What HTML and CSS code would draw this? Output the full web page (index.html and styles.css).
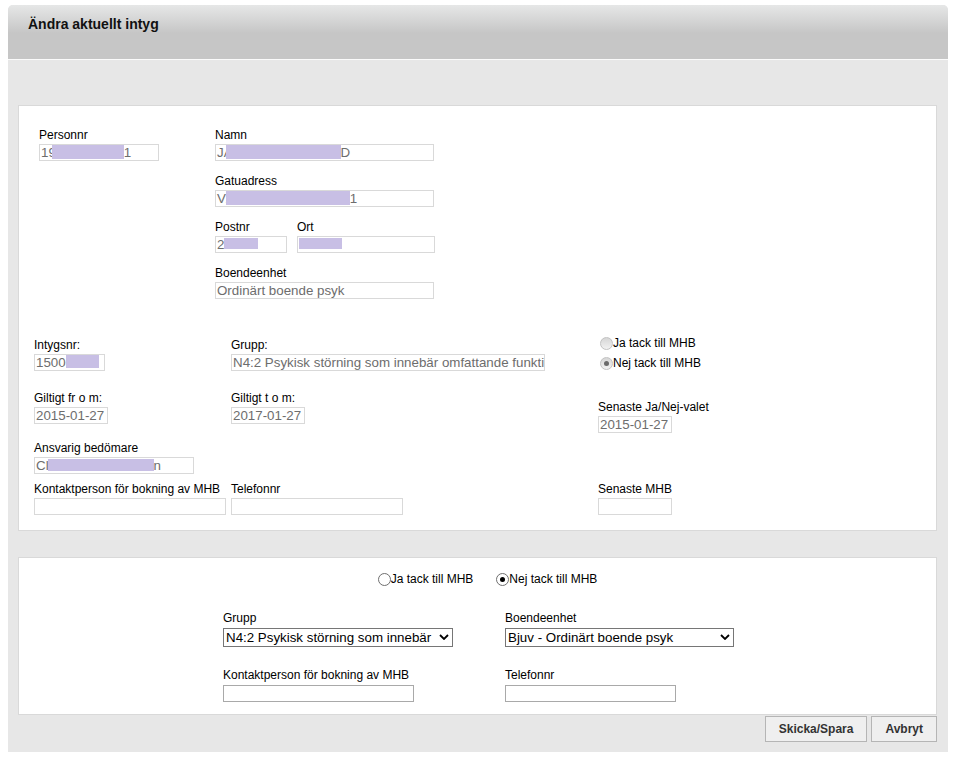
FILE: index.html
```html
<!DOCTYPE html>
<html lang="sv">
<head>
<meta charset="utf-8">
<title>Ändra aktuellt intyg</title>
<link rel="stylesheet" href="styles.css">
</head>
<body>
<div class="window">
  <div class="win-head"><h1 class="win-title">Ändra aktuellt intyg</h1></div>
  <div class="win-body">
    <section class="panel panel-info">
      <div class="person">
        <div class="person-main">
          <div class="field">
            <span class="lbl">Personnr</span>
            <div class="ro w-120">19<span class="red red-pnr"></span>1</div>
          </div>
        </div>
        <div class="stack">
          <div class="field">
            <span class="lbl">Namn</span>
            <div class="ro w-219">JA<span class="red red-namn"></span>D</div>
          </div>
          <div class="field">
            <span class="lbl">Gatuadress</span>
            <div class="ro w-219">VÄ<span class="red red-gata"></span>1</div>
          </div>
          <div class="split">
            <div class="field postnr">
              <span class="lbl">Postnr</span>
              <div class="ro w-72">20<span class="red red-post"></span></div>
            </div>
            <div class="field">
              <span class="lbl">Ort</span>
              <div class="ro w-138"><span class="red red-ort"></span></div>
            </div>
          </div>
          <div class="field">
            <span class="lbl">Boendeenhet</span>
            <div class="ro w-219">Ordinärt boende psyk</div>
          </div>
        </div>
      </div>

      <div class="cert">
        <div class="field">
          <span class="lbl">Intygsnr:</span>
          <div class="ro w-71">1500<span class="red red-intyg"></span></div>
        </div>
        <div class="field">
          <span class="lbl">Grupp:</span>
          <div class="ro w-314">N4:2 Psykisk störning som innebär omfattande funktionsnedsättning</div>
        </div>
        <div class="radios radios-ro">
          <div class="radio"><span class="rb dis"></span><span class="rtxt">Ja tack till MHB</span></div>
          <div class="radio"><span class="rb dis on"></span><span class="rtxt">Nej tack till MHB</span></div>
        </div>

        <div class="field">
          <span class="lbl">Giltigt fr o m:</span>
          <div class="ro w-74">2015-01-27</div>
        </div>
        <div class="field">
          <span class="lbl">Giltigt t o m:</span>
          <div class="ro w-74">2017-01-27</div>
        </div>
        <div class="field field-low">
          <span class="lbl">Senaste Ja/Nej-valet</span>
          <div class="ro w-74">2015-01-27</div>
        </div>

        <div class="field span-all">
          <span class="lbl">Ansvarig bedömare</span>
          <div class="ro w-160">Cl<span class="red red-ansv"></span>n</div>
        </div>

        <div class="field">
          <span class="lbl">Kontaktperson för bokning av MHB</span>
          <div class="ro w-192"></div>
        </div>
        <div class="field">
          <span class="lbl">Telefonnr</span>
          <div class="ro w-172"></div>
        </div>
        <div class="field">
          <span class="lbl">Senaste MHB</span>
          <div class="ro w-74"></div>
        </div>
      </div>
    </section>

    <section class="panel panel-edit">
      <div class="choice">
        <label class="radio"><span class="rb"></span><span class="rtxt">Ja tack till MHB</span></label>
        <label class="radio"><span class="rb on"></span><span class="rtxt">Nej tack till MHB</span></label>
      </div>
      <div class="edit-grid">
        <div class="field">
          <span class="lbl">Grupp</span>
          <div class="sel-wrap w-230">
            <select class="sel">
              <option>N4:2 Psykisk störning som innebär omfattande funktionsnedsättning</option>
            </select>
            <svg class="chev" viewBox="0 0 10 6" width="10" height="6"><path d="M1 1 L5 5 L9 1" fill="none" stroke="#000" stroke-width="1.8"/></svg>
          </div>
        </div>
        <div class="field">
          <span class="lbl">Boendeenhet</span>
          <div class="sel-wrap w-229">
            <select class="sel">
              <option>Bjuv - Ordinärt boende psyk</option>
            </select>
            <svg class="chev" viewBox="0 0 10 6" width="10" height="6"><path d="M1 1 L5 5 L9 1" fill="none" stroke="#000" stroke-width="1.8"/></svg>
          </div>
        </div>
        <div class="field">
          <span class="lbl">Kontaktperson för bokning av MHB</span>
          <input class="inp w-191" type="text">
        </div>
        <div class="field">
          <span class="lbl">Telefonnr</span>
          <input class="inp w-171" type="text">
        </div>
      </div>
    </section>

    <div class="actions">
      <button class="btn" type="button">Skicka/Spara</button>
      <button class="btn" type="button">Avbryt</button>
    </div>
  </div>
</div>
</body>
</html>
```

FILE: styles.css
```css
* { box-sizing: border-box; }

body {
  margin: 0;
  background: #fff;
  font-family: "Liberation Sans", Arial, sans-serif;
  font-size: 12px;
  color: #000;
}

.window {
  margin: 5px 7px 0 8px;
  background: #e7e7e7;
  border-radius: 5px 5px 0 0;
}

.win-head {
  height: 55px;
  padding: 11px 20px 0;
  background: linear-gradient(#e6e7e7 0, #c6c6c6 28px, #c6c6c6 100%);
  border-bottom: 1px solid #fbfbfb;
  border-radius: 5px 5px 0 0;
}

.win-title {
  margin: 0;
  font-size: 14px;
  line-height: 16px;
  font-weight: bold;
  color: #111;
}

.win-body {
  padding: 45px 11px 10px 10px;
}

.panel {
  background: #fff;
  border: 1px solid #d9d9d9;
}

/* ---------- info panel ---------- */
.panel-info {
  padding: 22px 0 15px;
}

.person {
  display: flex;
  padding-left: 20px;
}

.person-main { width: 176px; }

.stack {
  display: flex;
  flex-direction: column;
  gap: 13px;
}

.split { display: flex; }
.postnr { width: 82px; }

.lbl {
  display: block;
  line-height: 14px;
  white-space: nowrap;
}

.ro {
  margin-top: 2px;
  height: 17px;
  border: 1px solid #d9d9d9;
  padding: 0 1px;
  font-size: 13.333px;
  line-height: 15px;
  color: #6d6d6d;
  white-space: nowrap;
  overflow: hidden;
  background: #fff;
}

.w-71 { width: 71px; }
.w-72 { width: 72px; }
.w-74 { width: 74px; }
.w-120 { width: 120px; }
.w-138 { width: 138px; }
.w-160 { width: 160px; }
.w-171 { width: 171px; }
.w-172 { width: 172px; }
.w-191 { width: 191px; }
.w-192 { width: 192px; }
.w-219 { width: 219px; }
.w-229 { width: 229px; }
.w-230 { width: 230px; }
.w-314 { width: 314px; }

.red {
  display: inline-block;
  vertical-align: top;
  height: 14px;
  background: #c8bfe5;
}
.red-pnr { width: 72px; margin-left: -4px; }
.red-namn { width: 115px; margin-left: -7px; }
.red-gata { width: 124px; margin-left: -9px; }
.red-post { width: 34px; margin-left: -8px; height: 11px; margin-top: 1px; }
.red-ort { width: 43px; height: 11px; margin-top: 1px; }
.red-intyg { width: 33px; height: 13px; }
.red-ansv { width: 106px; margin-left: -1px; height: 12px; margin-top: 1px; }

.cert {
  display: grid;
  grid-template-columns: 197px 367px 1fr;
  grid-template-rows: 53px 50px 41px auto;
  align-items: start;
  margin-top: 39px;
  padding-left: 15px;
}

.span-all { grid-column: 1 / -1; }
.field-low { margin-top: 9px; }

.radios-ro {
  margin-top: -5px;
  padding-left: 2px;
}

.radio {
  display: flex;
  align-items: center;
  height: 20px;
  line-height: 14px;
  white-space: nowrap;
}

.rtxt { display: block; }

.rb {
  position: relative;
  display: block;
  flex: none;
  width: 13px;
  height: 13px;
  border-radius: 50%;
  border: 1px solid #6f6f6f;
  background: #fff;
}
.rb.on::after {
  content: "";
  position: absolute;
  left: 3px;
  top: 3px;
  width: 5px;
  height: 5px;
  border-radius: 50%;
  background: #000;
}
.rb.dis {
  border-color: #c2c2c2;
  background: linear-gradient(#d6d6d6, #f2f2f2);
}
.rb.dis.on::after { background: #6a6a6a; }

/* ---------- edit panel ---------- */
.panel-edit {
  margin-top: 26px;
  padding: 11px 0 12px;
}

.choice {
  display: flex;
  justify-content: center;
  gap: 23px;
  padding-left: 20px;
}

.edit-grid {
  display: grid;
  grid-template-columns: 282px 1fr;
  row-gap: 21px;
  margin-top: 22px;
  padding-left: 204px;
}

.sel-wrap {
  position: relative;
  margin-top: 3px;
}

.sel {
  display: block;
  -webkit-appearance: none;
  appearance: none;
  width: 100%;
  height: 19px;
  margin: 0;
  border: 1px solid #767676;
  border-radius: 0;
  background: #fff;
  padding: 0 18px 0 2px;
  font-family: "Liberation Sans", Arial, sans-serif;
  font-size: 13.333px;
  line-height: 17px;
  color: #000;
}

.chev {
  position: absolute;
  right: 4px;
  top: 6px;
  pointer-events: none;
}

.inp {
  display: block;
  margin: 3px 0 0;
  height: 17px;
  border: 1px solid #a9a9a9;
  border-radius: 0;
  padding: 0 2px;
  font-family: "Liberation Sans", Arial, sans-serif;
  font-size: 13.333px;
  background: #fff;
}

/* ---------- actions ---------- */
.actions {
  display: flex;
  justify-content: flex-end;
  gap: 4px;
  margin-top: 1px;
}

.btn {
  height: 26px;
  padding: 0 13px;
  border: 1px solid #b5b5b5;
  border-radius: 0;
  background: #efefef;
  font-family: "Liberation Sans", Arial, sans-serif;
  font-size: 12px;
  font-weight: bold;
  color: #333;
}
```
